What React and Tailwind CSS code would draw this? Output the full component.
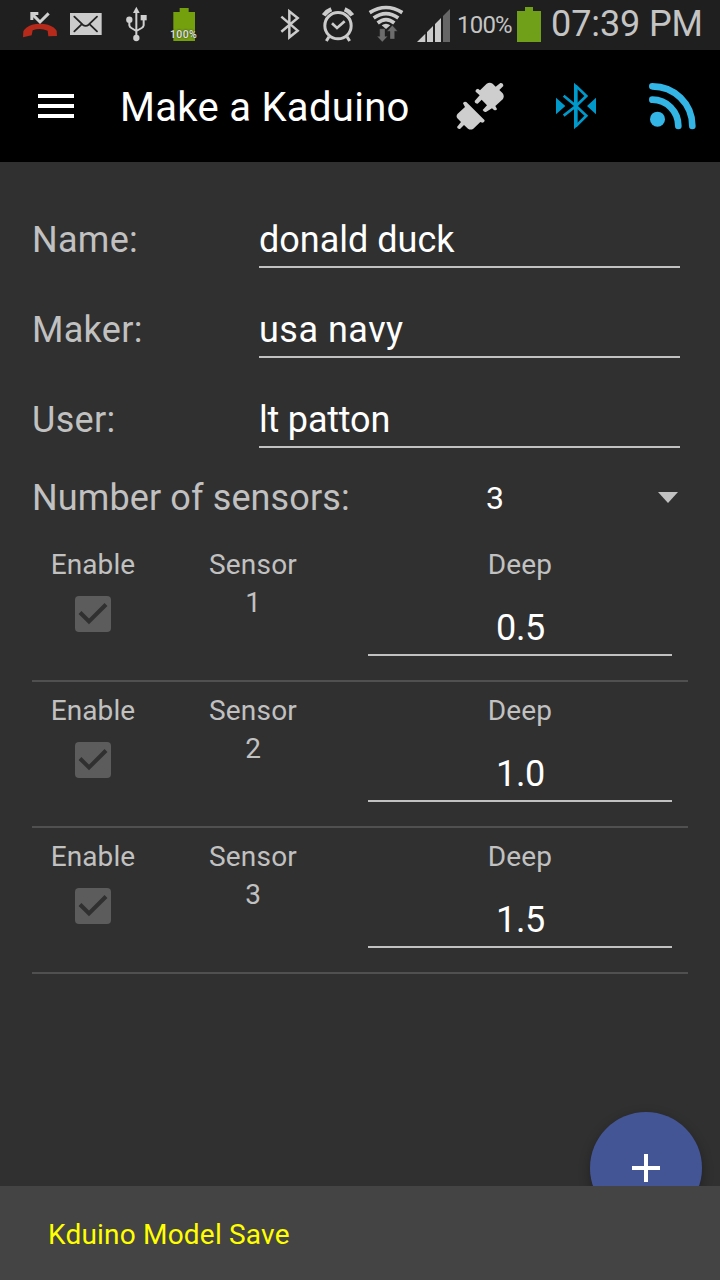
import React from "react";

function MissedCall() {
  return (
    <svg className="ml-[22px] block h-[50px] w-9 shrink-0" viewBox="66 0 108 150">
      <path d="M69 112L70 94Q77 80 96 74Q120 68 144 74Q163 80 170 92L171 108L145 109L143 92Q120 82 98 91L95 106Z" fill="#b52a1a" />
      <path d="M98 44L120 66L146 40" fill="none" stroke="#cfcfcf" strokeWidth="9" />
      <path d="M91 36H115V45H100V60H91Z" fill="#cfcfcf" />
    </svg>
  );
}

function Mail() {
  return (
    <svg className="ml-3 block h-[50px] w-8 shrink-0" viewBox="210 0 96 150">
      <rect x="210" y="39" width="95" height="66" fill="#cbcbcb" />
      <path d="M223 50L248 74Q257 81 266 74L291 50M223 94L244 74M291 94L270 74" fill="none" stroke="#222" strokeWidth="5.5" strokeLinecap="round" />
    </svg>
  );
}

function Usb() {
  return (
    <svg className="ml-6 block h-[50px] w-[22px] shrink-0" viewBox="377 0 66 150">
      <g fill="#cfcfcf">
        <path d="M408 20L418 39H398Z" />
        <circle cx="387" cy="59" r="9.5" />
        <rect x="421" y="45" width="18" height="16" />
        <circle cx="408" cy="114" r="9.5" />
      </g>
      <path d="M408 36V110M387 62V76Q388 81 393 84L408 93M430 58V76Q429 81 424 84L408 93" fill="none" stroke="#cfcfcf" strokeWidth="6" />
    </svg>
  );
}

function SmallBattery() {
  return (
    <div className="relative ml-[25px] h-[50px] w-[22px] shrink-0">
      <svg className="block h-[50px] w-[22px]" viewBox="519 0 66 150">
        <path d="M520 36H539V24H566V36H585V123H520Z" fill="#74a00d" />
      </svg>
      <span className="absolute -left-[3px] top-[29px] text-[10.5px] font-medium leading-3 tracking-[0.4px] text-[#e2e2e2] [text-shadow:0_0_2px_#222]">
        100%
      </span>
    </div>
  );
}

function Bluetooth() {
  return (
    <svg className="ml-[85px] block h-[50px] w-5 shrink-0" viewBox="60 0 60 150">
      <path d="M64 50L113 92L88 112V34L113 54L64 95" fill="none" stroke="#cbcbcb" strokeWidth="7.5" />
    </svg>
  );
}

function Alarm() {
  return (
    <svg className="ml-[22px] block h-[50px] w-8 shrink-0" viewBox="187 0 96 150">
      <g fill="none" stroke="#cbcbcb">
        <circle cx="235" cy="77" r="39.5" strokeWidth="9" />
        <path d="M217 70L232 84L255 64" strokeWidth="8" />
        <path d="M208 110L200 123M262 110L270 123" strokeWidth="9" />
        <path d="M192 46Q200 34 215 28M278 46Q270 34 255 28" strokeWidth="13" strokeLinecap="butt" />
      </g>
    </svg>
  );
}

function Wifi() {
  return (
    <svg className="ml-3.5 block h-[50px] w-9 shrink-0" viewBox="323 0 108 150">
      <g fill="none" stroke="#cbcbcb" strokeWidth="11">
        <path d="M328 38Q377 7 426 38" />
        <path d="M340 54Q377 28 414 54" />
        <path d="M352 69Q377 49 402 69" />
      </g>
      <path d="M364 76Q377 66 390 76L377 87Z" fill="#cbcbcb" />
      <path d="M358 86H374V109H382L366 126L350 109H358ZM389 117V94H380L396 76L412 94H403V117Z" fill="#6c6c6c" stroke="#1f1f1f" strokeWidth="1" />
    </svg>
  );
}

function Signal() {
  return (
    <svg className="ml-[13px] block h-[50px] w-[34px] shrink-0" viewBox="471 0 102 150">
      <path d="M471 126L496 101V126ZM501 96L519 78V126H501ZM525 72L543 54V126H525Z" fill="#cbcbcb" />
      <path d="M549 48L570 27V126H549Z" fill="#666" />
    </svg>
  );
}

function StatusBar() {
  return (
    <div className="flex h-[50px] bg-[#1f1f1f] text-[#c4c4c4]">
      <MissedCall />
      <Mail />
      <Usb />
      <SmallBattery />
      <Bluetooth />
      <Alarm />
      <Wifi />
      <Signal />
      <span className="ml-[6px] w-[60px] shrink-0 text-2xl leading-[50px] tracking-[-0.8px] whitespace-nowrap">100%</span>
      <svg className="block h-[50px] w-6 shrink-0" viewBox="111 0 72 150">
        <path d="M111 33H135V21H159V33H183V126H111Z" fill="#70a01a" />
      </svg>
      <span className="ml-[10px] text-4xl leading-[49px] tracking-[-0.1px] whitespace-nowrap">07:39 PM</span>
    </div>
  );
}

function Toolbar() {
  return (
    <div className="flex h-28 items-center bg-black">
      <div className="ml-[38px] flex w-9 flex-col gap-1.5">
        <div className="h-1 bg-white" />
        <div className="h-1 bg-white" />
        <div className="h-1 bg-white" />
      </div>
      <h1 className="ml-[46px] w-[300px] pt-[3px] text-[40px] leading-[48px] font-normal tracking-[0.3px] whitespace-nowrap text-white">Make a Kaduino</h1>
      <svg className="ml-9 block h-12 w-12" viewBox="79 67 144 144">
        <g fill="#cecece">
          <path d="M138 96Q136 88 145 87L151 92L171 72Q180 66 189 72L198 81L212 70Q221 69 221 79L209 91L219 101Q225 109 220 118L197 139L202 148Q200 154 193 151L187 146L170 156Q164 159 159 151L172 137L156 120L144 132Q135 132 135 124L150 107Z" />
          <path d="M100 131Q102 124 110 127L165 182Q165 189 158 189L152 187L131 207Q123 212 115 207L103 196L91 208Q84 209 82 202L94 187L83 176Q78 169 84 162L106 142Z" />
        </g>
      </svg>
      <svg className="ml-[52px] block h-12 w-10" viewBox="378 66 120 144">
        <path d="M401 107L438 138L401 167M437 77L469 108L438 138L469 167L437 199" fill="none" stroke="#0099cc" strokeWidth="8" />
        <path d="M432 68L443 79V197L432 208ZM378 113L406 138L378 163ZM498 113L471 138L498 163Z" fill="#0099cc" />
      </svg>
      <svg className="ml-[53px] block h-12 w-12" viewBox="657 66 144 144">
        <circle cx="682.5" cy="177.500" r="22.500" fill="#33b5e5" />
        <path d="M667 79C732 79 787 130 787 198M667 119C710 119 745 154 745 198" fill="none" stroke="#33b5e5" strokeWidth="20" strokeLinecap="round" />
      </svg>
    </div>
  );
}

function Field({ label, value, tracking = "" }) {
  return (
    <div className="flex h-[90px] items-end pr-10 pl-8">
      <label className="w-[227px] pb-[7px] text-4xl leading-[42px] tracking-[0.3px] text-[#c1c1c1]">{label}</label>
      <div className={`flex-1 border-b-2 border-[#c1c1c1] pb-[5px] text-4xl leading-[42px] text-white ${tracking}`}>{value}</div>
    </div>
  );
}

function SensorRow({ number, depth }) {
  return (
    <div className="mx-8 grid h-[146px] grid-cols-[122px_198px_336px] border-b-2 border-[#505050] pt-3 text-center text-[28px] leading-[33px] text-[#c1c1c1]">
      <div className="flex flex-col items-center">
        <span className="tracking-[0.1px]">Enable</span>
        <svg className="mt-[15px] block h-9 w-9" viewBox="0 0 36 36">
          <rect width="36" height="36" rx="4" fill="#5c5c5c" />
          <path d="M5 16.500L14 25.500L31 8.500" fill="none" stroke="#303030" strokeWidth="4" />
        </svg>
      </div>
      <div className="flex flex-col gap-[5px]">
        <span className="tracking-[0.2px]">Sensor</span>
        <span>{number}</span>
      </div>
      <div className="flex flex-col">
        <span className="tracking-[0.2px]">Deep</span>
        <div className="mx-4 mt-[25px] h-[50px] border-b-2 border-[#c1c1c1] pt-px pl-px text-4xl leading-[42px] tracking-[-0.3px] text-white">{depth}</div>
      </div>
    </div>
  );
}

export default function App() {
  return (
    <div className="relative flex h-[1280px] w-[720px] flex-col overflow-hidden bg-[#303030] font-[Roboto,sans-serif]">
      <StatusBar />
      <Toolbar />
      <main className="flex-1 pt-4">
        <Field label="Name:" value="donald duck" />
        <Field label="Maker:" value="usa navy" tracking="tracking-[0.5px]" />
        <Field label="User:" value="lt patton" tracking="tracking-[-0.2px]" />
        <div className="flex h-[88px] items-center px-8 pt-[11px]">
          <span className="w-[454px] text-4xl leading-[42px] tracking-[0.12px] text-[#c1c1c1]">Number of sensors:</span>
          <span className="pt-px text-[32px] leading-[38px] text-white">3</span>
          <svg className="mr-[10px] ml-auto block h-[11px] w-5" viewBox="0 0 20 11">
            <path d="M0 0H20L10 11Z" fill="#c1c1c1" />
          </svg>
        </div>
        <SensorRow number="1" depth="0.5" />
        <SensorRow number="2" depth="1.0" />
        <SensorRow number="3" depth="1.5" />
      </main>
      <button className="absolute top-[1112px] left-[590px] flex h-28 w-28 items-center justify-center rounded-full bg-[#445596] shadow-[0_4px_12px_rgba(0,0,0,0.3)]">
        <svg className="block h-7 w-7" viewBox="0 0 28 28">
          <path d="M12 0H16V12H28V16H16V28H12V16H0V12H12Z" fill="#fff" />
        </svg>
      </button>
      <div className="relative flex h-[94px] items-center bg-[#444] pt-0.5 pl-12 text-[28px] leading-[33px] tracking-[0.2px] text-[#ffff00]">Kduino Model Save</div>
    </div>
  );
}
